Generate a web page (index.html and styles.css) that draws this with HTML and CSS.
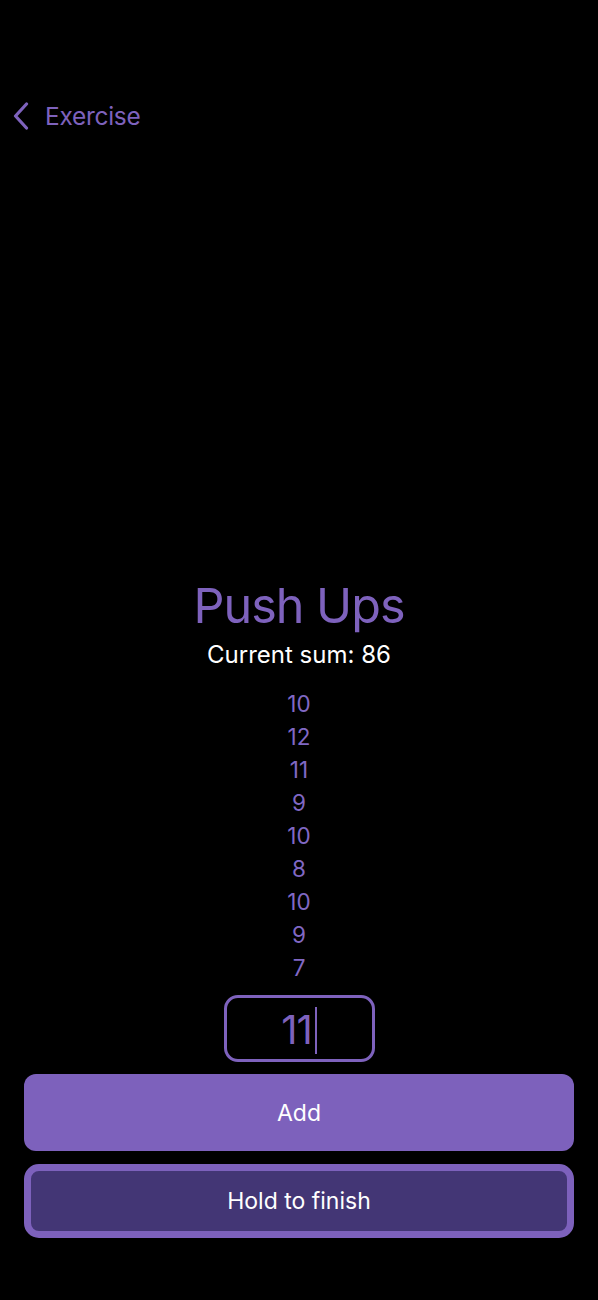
FILE: index.html
```html
<!DOCTYPE html>
<html lang="en">
<head>
<meta charset="utf-8">
<title>Push Ups</title>
<link rel="stylesheet" href="styles.css">
</head>
<body>
<div class="screen">
  <header class="nav">
    <svg class="chevron" width="16" height="28" viewBox="0 0 16 28" aria-hidden="true">
      <path d="M13.5 2 L2.5 14 L13.5 26" fill="none" stroke="#7e62bd" stroke-width="3.2" stroke-linecap="round" stroke-linejoin="round"/>
    </svg>
    <span class="nav-title">Exercise</span>
  </header>
  <main class="content">
    <h1 class="title">Push Ups</h1>
    <p class="sum">Current sum: 86</p>
    <ul class="sets">
      <li>10</li>
      <li>12</li>
      <li>11</li>
      <li>9</li>
      <li>10</li>
      <li>8</li>
      <li>10</li>
      <li>9</li>
      <li>7</li>
    </ul>
    <div class="input">
      <span class="input-value">11</span><span class="caret"></span>
    </div>
    <button class="btn btn-add">Add</button>
    <button class="btn btn-hold">Hold to finish</button>
  </main>
</div>
</body>
</html>
```
FILE: styles.css
```css
html, body {
  margin: 0;
  padding: 0;
  background: #000;
}
body {
  font-family: Inter, "Noto Sans", "Liberation Sans", sans-serif;
  color: #fff;
}
.screen {
  width: 598px;
  height: 1300px;
  display: flex;
  flex-direction: column;
  box-sizing: border-box;
}
.nav {
  display: flex;
  align-items: center;
  padding: 100px 0 0 13px;
  height: 32px;
  gap: 16px;
}
.chevron {
  display: block;
}
.nav-title {
  font-size: 24.5px;
  line-height: 32px;
  color: #7e62bd;
  letter-spacing: -0.3px;
}
.content {
  margin-top: auto;
  padding: 0 24px 62px;
  display: flex;
  flex-direction: column;
  align-items: center;
}
.title {
  margin: 0;
  font-size: 48.5px;
  line-height: 56px;
  font-weight: 400;
  color: #7e62bd;
  letter-spacing: -1px;
}
.sum {
  margin: 6px 0 0;
  font-size: 24px;
  line-height: 30px;
  color: #fff;
  letter-spacing: 0;
}
.sets {
  list-style: none;
  margin: 17px 0 0;
  padding: 0;
  text-align: center;
}
.sets li {
  font-size: 22.5px;
  line-height: 33px;
  color: #8068c4;
}
.input {
  margin-top: 11px;
  width: 151px;
  height: 67px;
  box-sizing: border-box;
  border: 3px solid #7e62bd;
  border-radius: 14px;
  display: flex;
  align-items: center;
  justify-content: center;
  gap: 3px;
}
.input-value {
  font-size: 40px;
  line-height: 48px;
  color: #7e62bd;
  letter-spacing: -1px;
  margin-top: 2px;
}
.caret {
  width: 2px;
  height: 47px;
  background: #7e62bd;
  margin-top: 4px;
}
.btn {
  display: flex;
  align-items: center;
  justify-content: center;
  width: 550px;
  box-sizing: border-box;
  font-family: inherit;
  font-size: 23px;
  color: #fff;
  border: none;
  padding: 0;
}
.btn-add {
  margin-top: 12px;
  height: 77px;
  background: #7d61bc;
  border-radius: 12px;
}
.btn-hold {
  margin-top: 13px;
  height: 74px;
  background: #433675;
  border: 7px solid #7d61bc;
  border-radius: 15px;
}
```
